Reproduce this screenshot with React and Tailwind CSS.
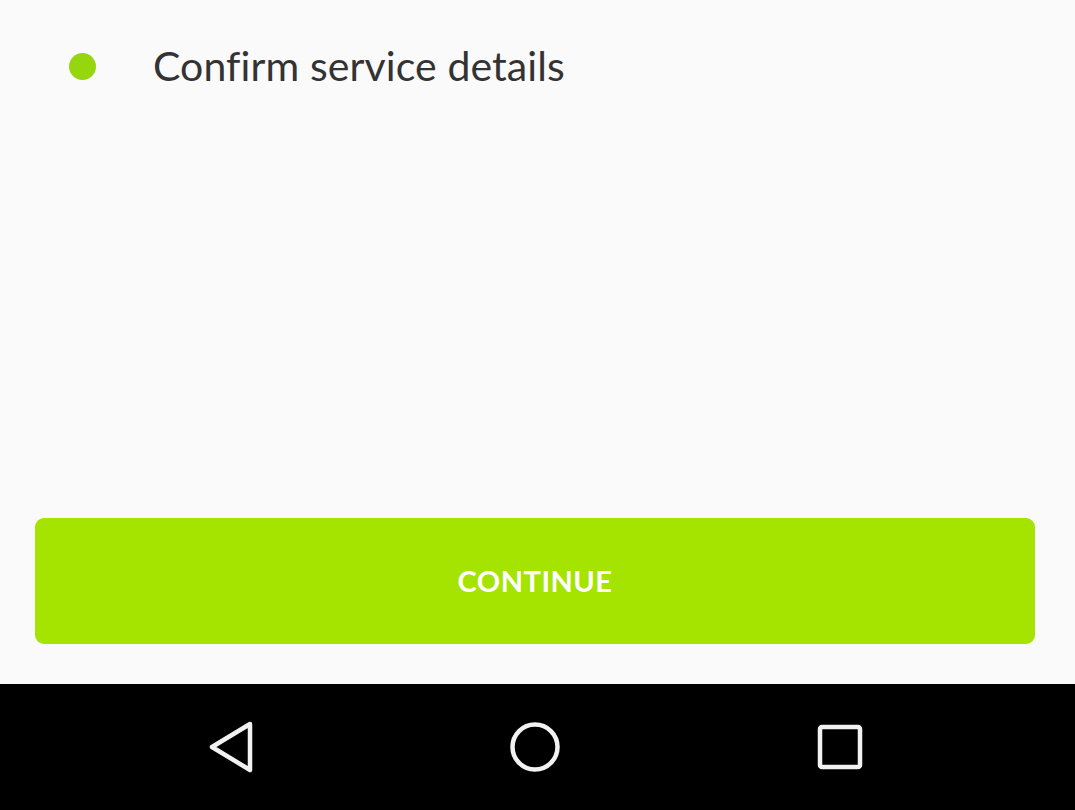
export default function App() {
  return (
    <div className="w-[1075px] h-[810px] flex flex-col bg-[#fafafa]" style={{ fontFamily: "Lato, 'Noto Sans', sans-serif" }}>
      <div className="flex items-center h-[132px] pl-[69px]">
        <span className="w-[27px] h-[27px] rounded-full bg-[#96d60e] shrink-0" />
        <span className="ml-[57px] text-[41px] text-[#333333] tracking-[0.1px]">Confirm service details</span>
      </div>
      <div className="flex-1" />
      <div className="pl-[35px] pr-[40px] pb-[40px]">
        <button className="w-full h-[126px] rounded-[9px] bg-[#a4e400] text-white text-[29px] font-bold tracking-[0.5px]">
          CONTINUE
        </button>
      </div>
      <div className="h-[126px] bg-black flex items-center pl-[208px]">
        <svg width="48" height="52" viewBox="0 0 48 52">
          <path d="M42 3 L4 26 L42 49 Z" fill="none" stroke="#f2f2f2" strokeWidth="4.5" strokeLinejoin="round" />
        </svg>
        <svg width="52" height="52" viewBox="0 0 52 52" className="ml-[253px]">
          <circle cx="26" cy="26" r="22.5" fill="none" stroke="#f2f2f2" strokeWidth="4.5" />
        </svg>
        <svg width="46" height="46" viewBox="0 0 46 46" className="ml-[256px]">
          <rect x="3" y="3" width="40" height="40" rx="2" fill="none" stroke="#f2f2f2" strokeWidth="4.5" />
        </svg>
      </div>
    </div>
  );
}
